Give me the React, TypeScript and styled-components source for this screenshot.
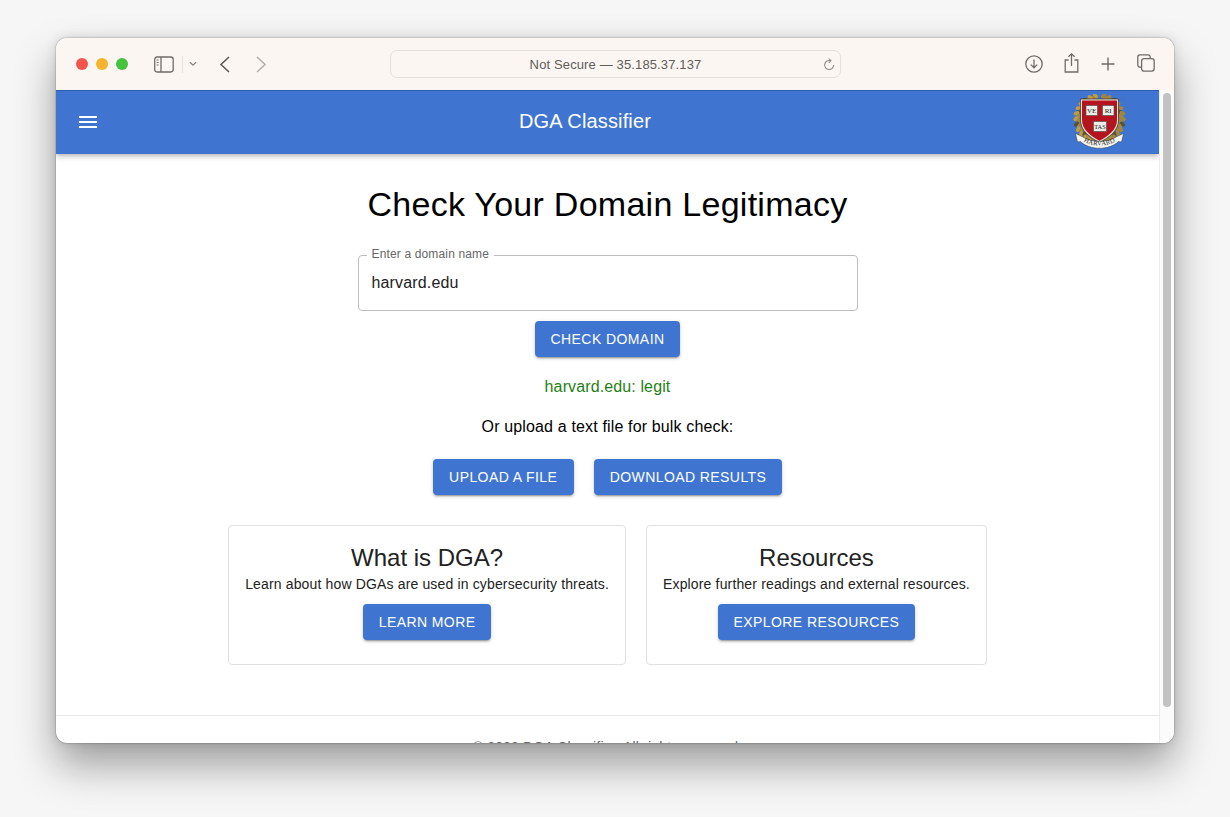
import React from "react";
import styled, { createGlobalStyle } from "styled-components";

const Global = createGlobalStyle`
  html, body { margin: 0; padding: 0; height: 100%; background: #f6f6f6; overflow: hidden; }
  body { font-family: "Liberation Sans", Arial, sans-serif; }
  * { box-sizing: border-box; }
`;

const Desktop = styled.div`
  width: 1230px;
  height: 817px;
  padding: 38px 56px 74px;
  background: #f6f6f6;
`;
const Window = styled.div`
  width: 1118px;
  height: 705px;
  border-radius: 11px;
  overflow: hidden;
  display: flex;
  flex-direction: column;
  background: #fff;
  box-shadow: 0 22px 42px rgba(0, 0, 0, 0.36), 0 0 12px rgba(0, 0, 0, 0.12), 0 0 1.5px rgba(0, 0, 0, 0.55);
`;
const TitleBar = styled.div`
  height: 52px;
  flex: none;
  background: #fbf6f2;
  display: flex;
  align-items: center;
  padding: 0 18px 0 20px;
`;
const Lights = styled.div`
  display: flex;
  gap: 8px;
  margin-right: 26px;
`;
const Light = styled.span<{ $c: string }>`
  width: 12px;
  height: 12px;
  border-radius: 50%;
  background: ${(p) => p.$c};
`;
const ToolIcon = styled.svg<{ $ml?: number; $mb?: number }>`
  display: block;
  flex: none;
  margin-left: ${(p) => p.$ml ?? 0}px;
  margin-bottom: ${(p) => p.$mb ?? 0}px;
`;
const ToolDivider = styled.span`
  width: 1px;
  height: 17px;
  flex: none;
  margin-left: 8px;
  background: #e8e3df;
`;
const UrlBar = styled.div`
  position: relative;
  width: 451px;
  height: 28px;
  margin-left: 123px;
  margin-right: 184px;
  border: 1px solid #e5e0dc;
  border-radius: 7px;
  display: flex;
  align-items: center;
  justify-content: center;
  font-size: 13px;
  color: #5f5c5a;
  letter-spacing: 0.13px;
`;
const Reload = styled.svg`
  position: absolute;
  right: 5px;
  top: 7px;
`;
const Body = styled.div`
  flex: 1;
  min-height: 0;
  display: flex;
`;
const Page = styled.div`
  flex: 1;
  min-width: 0;
  display: flex;
  flex-direction: column;
  overflow: hidden;
`;
const AppBar = styled.header`
  height: 64px;
  flex: none;
  background: #3f75d1;
  border-top: 1px solid #2f5aa8;
  display: flex;
  align-items: center;
  padding: 0 24px 0 23px;
  color: #fff;
  box-shadow: 0 2px 4px -1px rgba(0, 0, 0, 0.2), 0 4px 5px rgba(0, 0, 0, 0.12);
  position: relative;
`;
const Burger = styled.svg`
  flex: none;
  display: block;
  margin-bottom: 1px;
`;
const AppTitle = styled.div`
  flex: 1;
  text-align: center;
  font-size: 20px;
  line-height: 24px;
  letter-spacing: 0.15px;
  margin: 0 0 3px 2px;
`;
const Crest = styled.svg`
  flex: none;
  display: block;
  margin-right: 6px;
`;
const Main = styled.main`
  flex: none;
  height: 561px;
  display: flex;
  flex-direction: column;
  align-items: center;
  padding-top: 30px;
`;
const Heading = styled.h1`
  margin: 0;
  font-size: 34px;
  line-height: 40px;
  font-weight: 400;
  color: #000;
  letter-spacing: 0.27px;
`;
const Field = styled.div`
  position: relative;
  width: 500px;
  height: 56px;
  margin-top: 31px;
  border: 1px solid #bdbdbd;
  border-radius: 4px;
  padding: 0 13px;
  display: flex;
  align-items: center;
  font-size: 16px;
  color: #222;
  letter-spacing: 0.15px;
`;
const FieldLabel = styled.span`
  position: absolute;
  left: 8px;
  top: -9px;
  padding: 0 5px;
  background: #fff;
  font-size: 12px;
  line-height: 15px;
  color: #666;
`;
const Btn = styled.button`
  height: 36px;
  padding: 0 16px;
  border: 0;
  border-radius: 4px;
  background: #3f75d1;
  color: #fff;
  font-family: inherit;
  font-size: 14px;
  letter-spacing: 0.42px;
  text-transform: uppercase;
  box-shadow: 0 3px 1px -2px rgba(0, 0, 0, 0.2), 0 2px 2px rgba(0, 0, 0, 0.14), 0 1px 5px rgba(0, 0, 0, 0.12);
`;
const UploadBtn = styled(Btn)`
  min-width: 141px;
`;
const CheckRow = styled.div`
  margin-top: 10px;
`;
const Verdict = styled.p`
  margin: 20px 0 0;
  font-size: 16px;
  line-height: 19px;
  color: #1f7f14;
  letter-spacing: 0.12px;
`;
const Hint = styled.p`
  margin: 21px 0 0;
  font-size: 16px;
  line-height: 19px;
  color: #000;
  letter-spacing: 0.15px;
`;
const BtnRow = styled.div`
  display: flex;
  gap: 20px;
  margin-top: 23px;
`;
const Cards = styled.div`
  display: flex;
  gap: 20px;
  margin-top: 30px;
`;
const Card = styled.section`
  height: 140px;
  padding: 18px 16px 0;
  border: 1px solid #e0e0e0;
  border-radius: 4px;
  display: flex;
  flex-direction: column;
  align-items: center;
`;
const CardTitle = styled.h2`
  margin: 0;
  font-size: 24px;
  line-height: 28px;
  font-weight: 400;
  color: #222;
`;
const CardText = styled.p`
  margin: 2px 0 10px;
  font-size: 14px;
  line-height: 20px;
  color: #222;
  letter-spacing: 0.15px;
`;
const Footer = styled.footer`
  flex: none;
  border-top: 1px solid #e8e8e8;
  padding-top: 21px;
  text-align: center;
  font-size: 14px;
  line-height: 20px;
  color: #666;
  letter-spacing: 0.17px;
`;
const Track = styled.div`
  width: 15px;
  flex: none;
  background: #fbfbfb;
  border-left: 1px solid #ececec;
  padding: 3px 3px 0 3px;
`;
const Thumb = styled.div`
  width: 8px;
  height: 614px;
  border-radius: 4px;
  background: #c2c2c2;
`;

const iconStroke = "#6f6b68";

// Leaves of the wreath, spread along an arc either side of the shield.
const leaves = Array.from({ length: 48 }, (_, i) => {
  const side = i % 2 === 0 ? -1 : 1;
  const step = Math.floor(i / 2);
  const deg = 10 + step * 6.6;
  const r = 22 + (step % 2 === 0 ? 1.6 : -0.8);
  const rad = (deg * Math.PI) / 180;
  return {
    x: 28.5 + side * r * Math.sin(rad),
    y: 25 - r * Math.cos(rad),
    rot: side * deg + 35 * side,
    fill: step % 5 === 4 ? "#5a5230" : i % 4 === 0 ? "#c09c3f" : "#a5873a",
  };
});

function HarvardCrest() {
  return (
    <Crest width="58" height="58" viewBox="0 0 58 58">
      {leaves.map((l, i) => (
        <ellipse
          key={i}
          cx={l.x}
          cy={l.y}
          rx="1.9"
          ry="3"
          fill={l.fill}
          transform={`rotate(${l.rot} ${l.x} ${l.y})`}
        />
      ))}
      <path d="M9.5 5H47.5V26C47.5 37 38 43.5 28.5 48.5 19 43.5 9.5 37 9.5 26Z" fill="#e9e4d6" stroke="#33291b" strokeWidth=".7" />
      <path d="M11 6.5H46V26C46 36 37 42 28.5 46.8 20 42 11 36 11 26Z" fill="#b5141f" />
      <g fill="#eeeee8" stroke="#4a4a4a" strokeWidth=".6">
        <rect x="15" y="11.5" width="11.5" height="10" />
        <rect x="31.5" y="11.5" width="11.5" height="10" />
        <rect x="22.5" y="27.5" width="13" height="10" />
      </g>
      <g fontFamily="Liberation Serif, serif" fontSize="7" fill="#222" textAnchor="middle">
        <text x="20.7" y="19.2">VE</text>
        <text x="37.2" y="19.2">RI</text>
        <text x="29" y="35.2" fontSize="6.4">TAS</text>
      </g>
      <path d="M4.5 39.5 11 42.5C20 49 37 49 46 42.5L52.5 39.5 50.5 48 47.5 47.5C38 56.5 19 56.5 9.5 47.5L6.5 48Z" fill="#f7f6f1" stroke="#3c3c3c" strokeWidth=".5" />
      <path id="harvard-ribbon" d="M10 45.5C19 53.5 38 53.5 47 45.5" fill="none" />
      <text fontFamily="Liberation Serif, serif" fontSize="6.6" fill="#222" textAnchor="middle" letterSpacing=".3">
        <textPath href="#harvard-ribbon" startOffset="50%">HARVARD</textPath>
      </text>
    </Crest>
  );
}

export default function App() {
  return (
    <Desktop>
      <Global />
      <Window>
        <TitleBar>
          <Lights>
            <Light $c="#f2544e" />
            <Light $c="#f5b42c" />
            <Light $c="#45c33c" />
          </Lights>
          <ToolIcon width="20" height="17" viewBox="0 0 20 17" fill="none" stroke={iconStroke} strokeWidth="1.3">
            <rect x="0.7" y="1" width="18.5" height="15" rx="2.4" />
            <line x1="7" y1="1" x2="7" y2="16" />
            <path d="M2.6 4h2M2.6 6.5h2M2.6 9h2" strokeWidth="1" />
          </ToolIcon>
          <ToolDivider />
          <ToolIcon $ml={6} width="8" height="6" viewBox="0 0 8 6" fill="none" stroke="#8a8682" strokeWidth="1.3">
            <path d="M1 1.2 4 4.2 7 1.2" />
          </ToolIcon>
          <ToolIcon $ml={22} width="12" height="17" viewBox="0 0 12 17" fill="none" stroke="#5f5c5a" strokeWidth="1.6">
            <path d="M10 1 2 8.5 10 16" />
          </ToolIcon>
          <ToolIcon $ml={24} width="12" height="17" viewBox="0 0 12 17" fill="none" stroke="#b3b0ad" strokeWidth="1.6">
            <path d="M2 1 10 8.5 2 16" />
          </ToolIcon>
          <UrlBar>
            Not Secure — 35.185.37.137
            <Reload width="12" height="13" viewBox="0 0 12 13" fill="none" stroke="#8f8b88" strokeWidth="1.1">
              <path d="M7.2 2.7A4.5 4.5 0 1 0 10.6 7" />
              <path d="M5.8 0.6 8 2.7 5.8 4.8" />
            </Reload>
          </UrlBar>
          <ToolIcon width="18" height="18" viewBox="0 0 18 18" fill="none" stroke={iconStroke} strokeWidth="1.3">
            <circle cx="9" cy="9" r="8.2" />
            <path d="M9 4.6v8M5.8 9.6 9 12.8l3.2-3.2" />
          </ToolIcon>
          <ToolIcon $ml={21} $mb={3} width="15" height="20" viewBox="0 0 15 20" fill="none" stroke={iconStroke} strokeWidth="1.3">
            <path d="M4.6 7H1.2v12h12.6V7h-3.4" />
            <path d="M7.5 13V1M4.4 3.8 7.5 .9l3.1 2.9" />
          </ToolIcon>
          <ToolIcon $ml={22} width="14" height="14" viewBox="0 0 14 14" fill="none" stroke={iconStroke} strokeWidth="1.4">
            <path d="M7 .5v13M.5 7h13" />
          </ToolIcon>
          <ToolIcon $ml={22} $mb={2} width="18" height="18" viewBox="0 0 18 18" fill="none" stroke={iconStroke} strokeWidth="1.3">
            <rect x="4.6" y="4.6" width="12.6" height="12.6" rx="2.4" />
            <path d="M4.6 13.2H3A2.2 2.2 0 0 1 .8 11V3A2.2 2.2 0 0 1 3 .8h8A2.2 2.2 0 0 1 13.2 3v1.6" />
          </ToolIcon>
        </TitleBar>
        <Body>
          <Page>
            <AppBar>
              <Burger width="18" height="12" viewBox="0 0 18 12" fill="#fff">
                <rect x="0" y="0" width="18" height="2" />
                <rect x="0" y="5" width="18" height="2" />
                <rect x="0" y="10" width="18" height="2" />
              </Burger>
              <AppTitle>DGA Classifier</AppTitle>
              <HarvardCrest />
            </AppBar>
            <Main>
              <Heading>Check Your Domain Legitimacy</Heading>
              <Field>
                <FieldLabel>Enter a domain name</FieldLabel>
                harvard.edu
              </Field>
              <CheckRow>
                <Btn>Check Domain</Btn>
              </CheckRow>
              <Verdict>harvard.edu: legit</Verdict>
              <Hint>Or upload a text file for bulk check:</Hint>
              <BtnRow>
                <UploadBtn>Upload a file</UploadBtn>
                <Btn>Download results</Btn>
              </BtnRow>
              <Cards>
                <Card>
                  <CardTitle>What is DGA?</CardTitle>
                  <CardText>Learn about how DGAs are used in cybersecurity threats.</CardText>
                  <Btn>Learn more</Btn>
                </Card>
                <Card>
                  <CardTitle>Resources</CardTitle>
                  <CardText>Explore further readings and external resources.</CardText>
                  <Btn>Explore resources</Btn>
                </Card>
              </Cards>
            </Main>
            <Footer>© 2023 DGA Classifier. All rights reserved.</Footer>
          </Page>
          <Track>
            <Thumb />
          </Track>
        </Body>
      </Window>
    </Desktop>
  );
}
